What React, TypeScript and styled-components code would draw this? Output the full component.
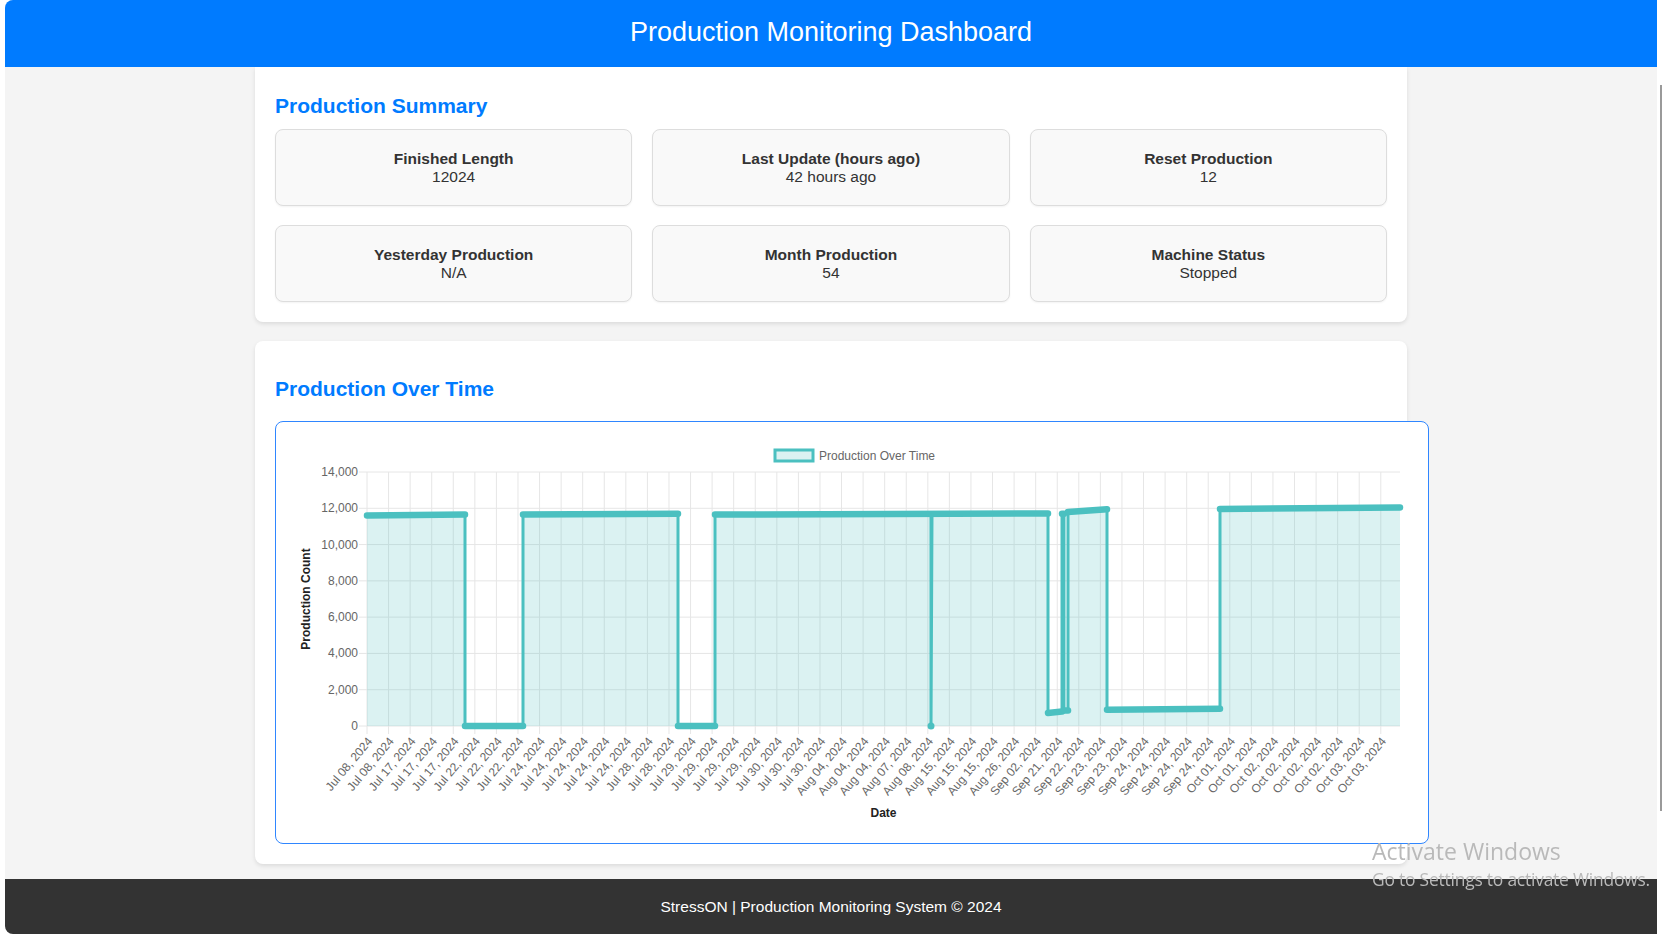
import React from 'react';
import styled, { createGlobalStyle } from 'styled-components';

const GlobalStyle = createGlobalStyle`
  html, body { margin: 0; padding: 0; background: #ffffff; }
  body { font-family: "Liberation Sans", Arial, sans-serif; color: #333; }
  * { box-sizing: border-box; }
`;

const Page = styled.div`
  margin-left: 5px;
  width: 1652px;
  height: 934px;
  background: #f4f4f4;
  border-radius: 8px 0 0 8px;
  overflow: hidden;
  display: flex;
  flex-direction: column;
`;

const Header = styled.header`
  flex: none;
  height: 67px;
  background: #007bff;
  color: #fff;
  display: flex;
  align-items: center;
  justify-content: center;
`;

const Title = styled.h1`
  margin: 0 0 3px;
  font-size: 27px;
  font-weight: normal;
  line-height: 1;
`;

const Main = styled.main`
  flex: none;
  display: flex;
  flex-direction: column;
  align-items: center;
  gap: 19px;
`;

const Panel = styled.section<{ $flush?: boolean }>`
  width: 1152px;
  background: #fff;
  border-radius: ${(p) => (p.$flush ? '0 0 8px 8px' : '8px')};
  box-shadow: 0 2px 4px rgba(0, 0, 0, 0.1);
  padding: ${(p) => (p.$flush ? '10px' : '20px')} 20px 20px;
`;

const SectionTitle = styled.h2<{ $top: number; $gap: number }>`
  margin: ${(p) => p.$top}px 0 ${(p) => p.$gap}px;
  font-size: 21px;
  line-height: 24px;
  font-weight: bold;
  color: #007bff;
`;

const CardGrid = styled.div`
  display: grid;
  grid-template-columns: repeat(3, 1fr);
  gap: 19px 20px;
`;

const Card = styled.div`
  background: #f9f9f9;
  border: 1px solid #ddd;
  border-radius: 8px;
  box-shadow: 0 1px 2px rgba(0, 0, 0, 0.05);
  padding: 19.5px 10px;
  text-align: center;
  font-size: 15.5px;
  line-height: 18px;
  color: #333;
`;

const CardLabel = styled.div`
  font-weight: bold;
`;

const CardValue = styled.div`
  font-weight: normal;
`;

const ChartBox = styled.div`
  width: 1154px;
  padding: 21px 21px 19px;
  border: 1px solid #2f86ff;
  border-radius: 8px;
  background: #fff;
`;

const ChartSvg = styled.svg`
  display: block;
  width: 1110px;
  height: 381px;
  font-family: "Liberation Sans", Arial, sans-serif;
`;

const Footer = styled.footer`
  margin-top: auto;
  flex: none;
  height: 55px;
  background: #333;
  color: #fff;
  display: flex;
  align-items: center;
  justify-content: center;
  font-size: 15.5px;
`;

const Watermark = styled.div`
  position: fixed;
  left: 1372px;
  top: 840px;
  color: #b9b9b9;
  font-family: "Open Sans", "Noto Sans", sans-serif;
  pointer-events: none;
  line-height: 1;
`;

const WatermarkTitle = styled.div`
  font-size: 23px;
  margin-bottom: 8px;
`;

const WatermarkSub = styled.div`
  font-size: 17.4px;
  letter-spacing: -0.2px;
`;

const ScrollEdge = styled.div`
  position: fixed;
  left: 1660px;
  top: 85px;
  width: 1.5px;
  height: 726px;
  background: #9a9a9a;
  pointer-events: none;
`;

const summary = [
  { label: 'Finished Length', value: '12024' },
  { label: 'Last Update (hours ago)', value: '42 hours ago' },
  { label: 'Reset Production', value: '12' },
  { label: 'Yesterday Production', value: 'N/A' },
  { label: 'Month Production', value: '54' },
  { label: 'Machine Status', value: 'Stopped' },
];

const rep = (s: string, n: number) => Array.from({ length: n }, () => `${s}, 2024`);
const xLabels: string[] = [
  ...rep('Jul 08', 2),
  ...rep('Jul 17', 3),
  ...rep('Jul 22', 3),
  ...rep('Jul 24', 5),
  ...rep('Jul 28', 2),
  ...rep('Jul 29', 4),
  ...rep('Jul 30', 3),
  ...rep('Aug 04', 3),
  ...rep('Aug 07', 1),
  ...rep('Aug 08', 1),
  ...rep('Aug 15', 3),
  ...rep('Aug 26', 1),
  ...rep('Sep 02', 1),
  ...rep('Sep 21', 1),
  ...rep('Sep 22', 1),
  ...rep('Sep 23', 2),
  ...rep('Sep 24', 4),
  ...rep('Oct 01', 2),
  ...rep('Oct 02', 4),
  ...rep('Oct 03', 2),
];

const PL = 70;
const PR = 1103;
const PT = 29;
const PB = 283;
const STEP = 21.57;
const Y = (v: number) => PB - (v * (PB - PT)) / 14000;

const line: [number, number][] = [
  [70, 11600], [168, 11650], [168, 0], [226, 0], [226, 11650], [381, 11700],
  [381, 0], [418, 0], [418, 11650], [634, 11700], [634, 0], [635, 11700],
  [751, 11720], [751, 720], [765, 800], [765, 11700], [767, 11700], [767, 850],
  [771, 850], [771, 11800], [810, 11950], [810, 900], [923, 950], [923, 11960],
  [1103, 12050],
];

const runs: [number, number][][] = [
  [[70, 11600], [168, 11650]],
  [[168, 0], [226, 0]],
  [[226, 11650], [381, 11700]],
  [[381, 0], [418, 0]],
  [[418, 11650], [751, 11720]],
  [[751, 720], [765, 800]],
  [[765, 11700], [767, 11700]],
  [[767, 850], [771, 850]],
  [[771, 11800], [810, 11950]],
  [[810, 900], [923, 950]],
  [[923, 11960], [1103, 12050]],
];

const pts = (arr: [number, number][]) => arr.map(([x, v]) => `${x},${Y(v).toFixed(1)}`).join(' ');

const Chart: React.FC = () => {
  const ticks = xLabels.map((_, i) => PL + i * STEP);
  const yTicks = [0, 2000, 4000, 6000, 8000, 10000, 12000, 14000];
  const fillPts = `${PL},${PB} ${pts(line)} ${PR},${PB}`;
  return (
    <ChartSvg viewBox="0 0 1110 381">
      <rect x={478} y={7} width={38} height={11} fill="rgba(75,192,192,0.2)" stroke="#4bc0c0" strokeWidth={3} />
      <text x={522} y={13} fontSize={12} fill="#666" dominantBaseline="central">Production Over Time</text>

      {yTicks.map((v) => (
        <g key={v}>
          <line x1={PL - 8} x2={PR} y1={Y(v)} y2={Y(v)} stroke="#e6e6e6" strokeWidth={1} />
          <text x={PL - 9} y={Y(v)} fontSize={12} fill="#666" textAnchor="end" dominantBaseline="central">
            {v.toLocaleString('en-US')}
          </text>
        </g>
      ))}
      {ticks.map((x, i) => (
        <line key={i} x1={x} x2={x} y1={PT} y2={PB + 8} stroke="#e6e6e6" strokeWidth={1} />
      ))}

      <polygon points={fillPts} fill="rgba(75,192,192,0.2)" />
      <polyline points={pts(line)} fill="none" stroke="#4bc0c0" strokeWidth={3} strokeLinejoin="round" />
      {runs.map((r, i) => (
        <polyline key={i} points={pts(r)} fill="none" stroke="#4bc0c0" strokeWidth={6.5} strokeLinecap="round" />
      ))}
      <circle cx={634} cy={Y(0)} r={3.5} fill="#4bc0c0" />

      {ticks.map((x, i) => (
        <text
          key={i}
          fontSize={12}
          fill="#666"
          textAnchor="end"
          dominantBaseline="central"
          transform={`translate(${x + 3} ${PB + 13}) rotate(-50)`}
        >
          {xLabels[i]}
        </text>
      ))}

      <text x={(PL + PR) / 2} y={370} fontSize={12} fontWeight="bold" fill="#222" textAnchor="middle" dominantBaseline="central">
        Date
      </text>
      <text
        fontSize={12}
        fontWeight="bold"
        fill="#222"
        textAnchor="middle"
        dominantBaseline="central"
        transform={`translate(9 ${(PT + PB) / 2}) rotate(-90)`}
      >
        Production Count
      </text>
    </ChartSvg>
  );
};

export default function App() {
  return (
    <>
      <GlobalStyle />
      <Page>
        <Header>
          <Title>Production Monitoring Dashboard</Title>
        </Header>
        <Main>
          <Panel $flush>
            <SectionTitle $top={17} $gap={11}>Production Summary</SectionTitle>
            <CardGrid>
              {summary.map((s) => (
                <Card key={s.label}>
                  <CardLabel>{s.label}</CardLabel>
                  <CardValue>{s.value}</CardValue>
                </Card>
              ))}
            </CardGrid>
          </Panel>
          <Panel>
            <SectionTitle $top={16} $gap={20}>Production Over Time</SectionTitle>
            <ChartBox>
              <Chart />
            </ChartBox>
          </Panel>
        </Main>
        <Footer>StressON | Production Monitoring System © 2024</Footer>
      </Page>
      <ScrollEdge />
      <Watermark>
        <WatermarkTitle>Activate Windows</WatermarkTitle>
        <WatermarkSub>Go to Settings to activate Windows.</WatermarkSub>
      </Watermark>
    </>
  );
}
